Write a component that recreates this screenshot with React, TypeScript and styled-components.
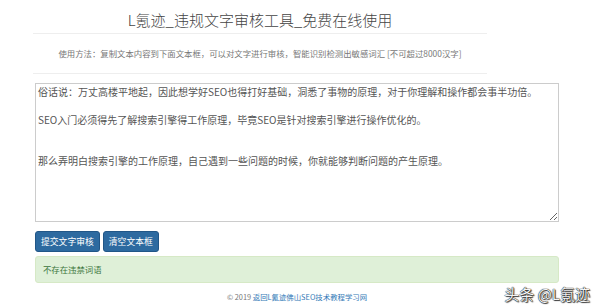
import React from 'react';
import styled, { createGlobalStyle } from 'styled-components';

const GlobalStyle = createGlobalStyle`
  html, body {
    margin: 0;
    padding: 0;
    background: #fff;
  }
  body {
    font-family: "Noto Sans CJK SC", "Noto Sans", sans-serif;
    color: #333;
  }
`;

const Page = styled.div`
  position: relative;
  width: 600px;
  height: 308px;
  overflow: hidden;
  padding-left: 33px;
  box-sizing: border-box;
`;

const Header = styled.header`
  width: 454px;
`;

const Title = styled.h1`
  margin: 0;
  padding-top: 10px;
  height: 23px;
  font-size: 15px;
  line-height: 20px;
  font-weight: 300;
  color: #444;
  text-align: center;
`;

const Rule = styled.div`
  height: 1px;
  background: #eee;
`;

const Usage = styled.p`
  margin: 0;
  height: 39px;
  line-height: 39px;
  font-size: 8.4px;
  color: #777;
  text-align: center;
  white-space: nowrap;
`;

const Main = styled.main`
  width: 524px;
  margin-left: 2px;
`;

const Editor = styled.div`
  margin-top: 9px;
  height: 139px;
  box-sizing: border-box;
  border: 1px solid #ccc;
  padding: 1px 2px;
  resize: both;
  overflow: auto;
  font-size: 10px;
  color: #555;
`;

const Line = styled.p<{ $gap: number }>`
  margin: 0 0 ${(p) => p.$gap}px;
  line-height: 14px;
  white-space: nowrap;
`;

const Actions = styled.div`
  display: flex;
  gap: 3px;
  margin-top: 9px;
`;

const Button = styled.button`
  height: 21px;
  padding: 0 5px;
  border: 1px solid #215687;
  border-radius: 3px;
  background: #2d6aa0;
  color: #fff;
  font-family: inherit;
  font-size: 8.8px;
  line-height: 19px;
`;

const Alert = styled.div`
  margin-top: 4px;
  height: 27px;
  box-sizing: border-box;
  border: 1px solid #d6e9c6;
  border-radius: 3px;
  background: #dff0d8;
  color: #3c763d;
  padding-left: 7px;
  font-size: 8.4px;
  line-height: 25px;
`;

const Footer = styled.footer`
  margin-top: 7px;
  text-align: center;
  font-size: 7.4px;
  line-height: 14px;
  color: #777;

  a {
    color: #337ab7;
    text-decoration: none;
  }
`;

const Watermark = styled.div`
  position: absolute;
  right: 10px;
  bottom: 5px;
  font-size: 15px;
  line-height: 18px;
  color: #f4f4f4;
  text-shadow: 0 0 1px #000, 0 0 1px #000, 1px 1px 1px #444;
  white-space: nowrap;
`;

export default function App() {
  return (
    <Page>
      <GlobalStyle />
      <Header>
        <Title>L氪迹_违规文字审核工具_免费在线使用</Title>
        <Rule />
        <Usage>使用方法：复制文本内容到下面文本框，可以对文字进行审核，智能识别检测出敏感词汇 [不可超过8000汉字]</Usage>
        <Rule />
      </Header>

      <Main>
        <Editor>
          <Line $gap={14}>俗话说：万丈高楼平地起，因此想学好SEO也得打好基础，洞悉了事物的原理，对于你理解和操作都会事半功倍。</Line>
          <Line $gap={27}>SEO入门必须得先了解搜索引擎得工作原理，毕竟SEO是针对搜索引擎进行操作优化的。</Line>
          <Line $gap={0}>那么弄明白搜索引擎的工作原理，自己遇到一些问题的时候，你就能够判断问题的产生原理。</Line>
        </Editor>

        <Actions>
          <Button>提交文字审核</Button>
          <Button>清空文本框</Button>
        </Actions>

        <Alert>不存在违禁词语</Alert>

        <Footer>
          © 2019 <a href="#">返回L氪迹佛山SEO技术教程学习网</a>
        </Footer>
      </Main>

      <Watermark>头条 @L氪迹</Watermark>
    </Page>
  );
}
